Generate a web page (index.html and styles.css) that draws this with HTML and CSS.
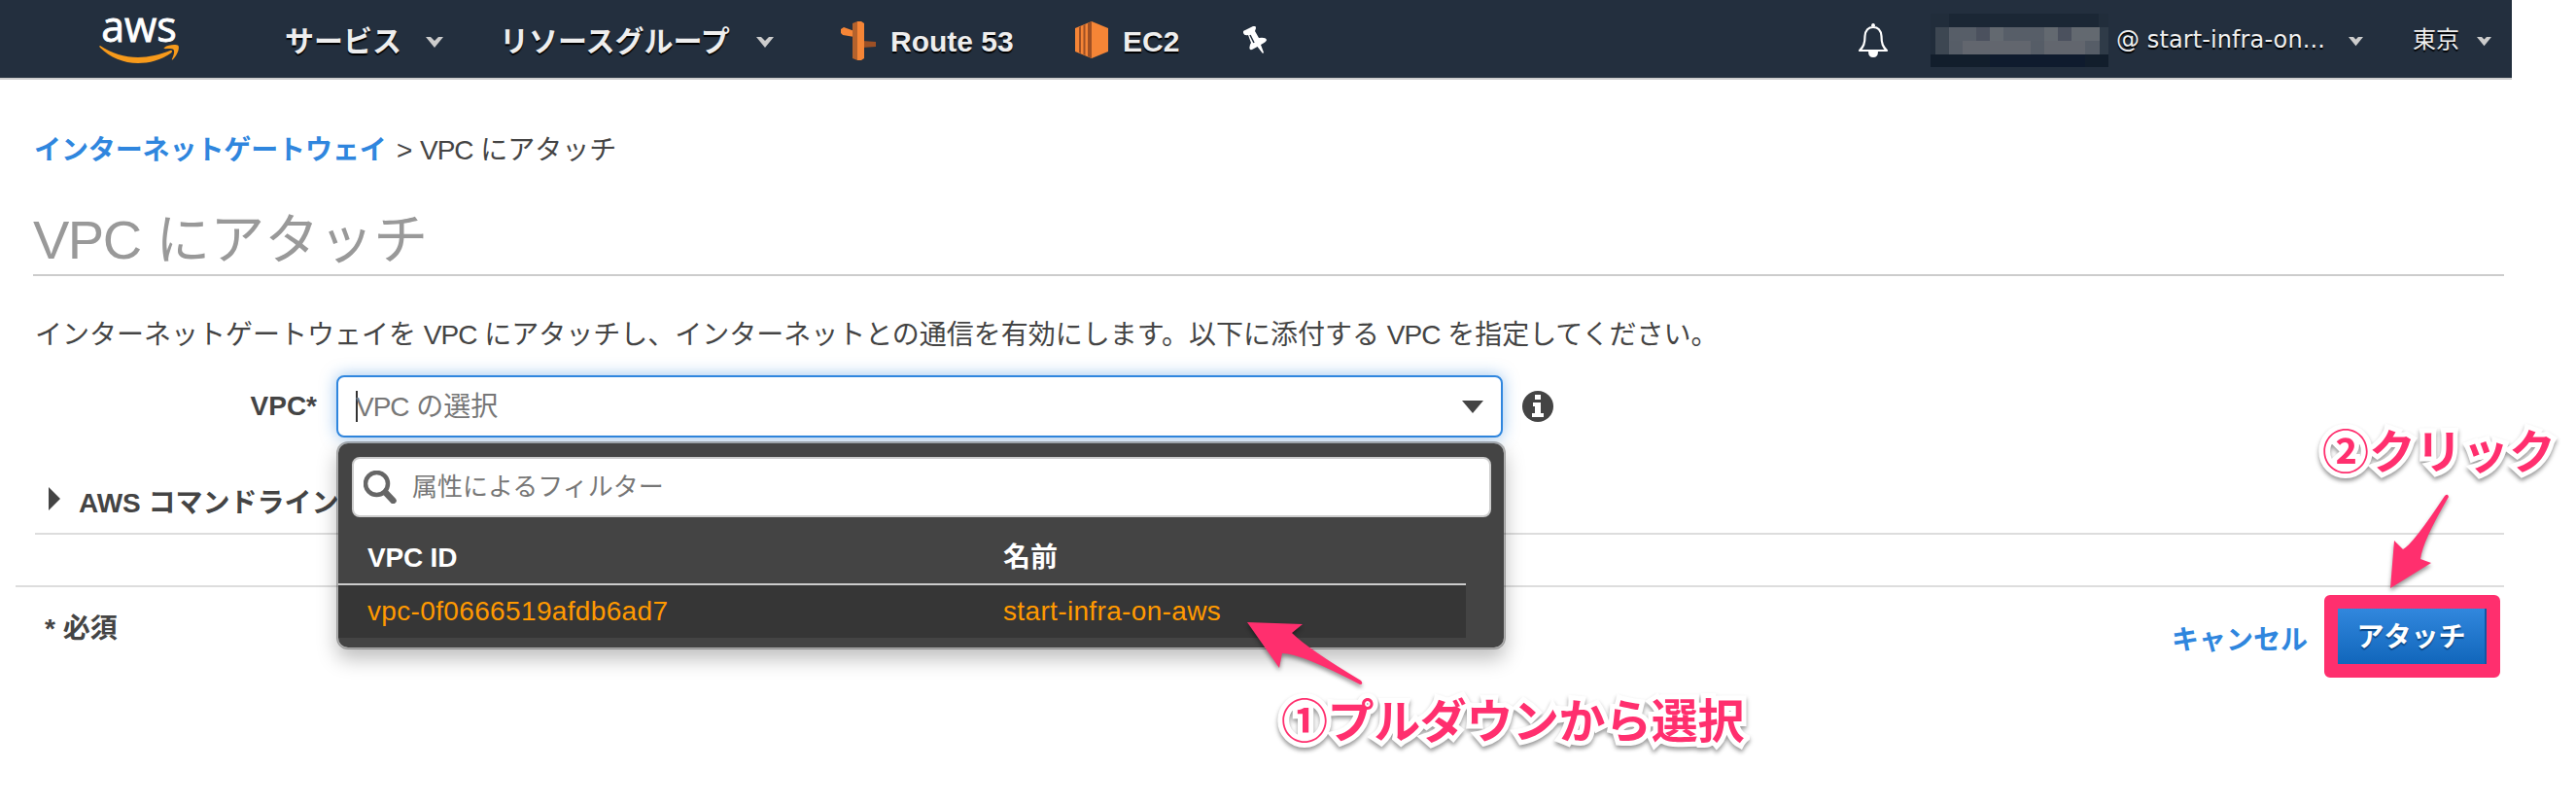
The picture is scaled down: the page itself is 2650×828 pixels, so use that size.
FILE: index.html
```html
<!DOCTYPE html>
<html lang="ja">
<head>
<meta charset="utf-8">
<title>VPC にアタッチ</title>
<link rel="stylesheet" href="styles.css">
</head>
<body>
<header class="nav">
  <div class="logo">
    <span class="logo-text">aws</span>
    <svg class="logo-smile" viewBox="0 0 82 20" width="82" height="20"><path fill="#f79a1b" d="M1 1C13 9 26 13 40 13C51 13 63 10 73 6C75 5 76 7 74 8.500C64 16 51 19 40 19C25 19 11 13 1 3C0 2 0 1 1 1Z"/><path fill="#f79a1b" d="M67 3C71-.5 80-.5 81.500 1C83 4 80 11 76 15C75 16 74.500 15.500 75 14.500C76.500 11 78 7 76.500 5C75 3.500 71 4 68 4.200C67 4.200 66 3.700 67 3Z"/></svg>
  </div>
  <a class="nav-item services">サービス</a>
  <svg class="caret caret-1" viewBox="0 0 18 12" width="18" height="12"><path d="M0 0H5L9 4L13 0H18L9 11Z" fill="#ccc"/></svg>
  <a class="nav-item groups">リソースグループ</a>
  <svg class="caret caret-2" viewBox="0 0 18 12" width="18" height="12"><path d="M0 0H5L9 4L13 0H18L9 11Z" fill="#ccc"/></svg>
  <svg class="route-icon" viewBox="0 0 36 40" width="36" height="40"><path fill="#f58536" d="M0 8L3 6L14 10V16L2 14L0 12Z"/><path fill="#9d5025" d="M22 20L36 21V26L22 27Z"/><path fill="#b5622c" d="M12 2L17 0V40L12 38Z"/><path fill="#f58536" d="M17 0H21L24 2V38L21 40H17Z"/></svg>
  <a class="nav-item route">Route 53</a>
  <svg class="ec2-icon" viewBox="0 0 34 38" width="34" height="38"><path fill="#f58536" d="M0 7L17 0L34 7V31L17 38L0 31Z"/><path fill="#9d5025" d="M4 6L6 5V33L4 32ZM8.500 4L10.500 3V35L8.500 34ZM13 2L17 0V38L13 36Z"/></svg>
  <a class="nav-item ec2">EC2</a>
  <svg class="pin" viewBox="0 0 24 28" width="24" height="28"><path fill="#fff" d="M0 7Q-1 5 2 4L10 0Q13-1 13 2L12 5L16 12Q23 11 24 14Q24 16 18 19L21 27L20 28L14.500 21Q7 26 6.500 23Q6 20 8 17L5 9Q1 10 0 7Z"/><path d="M7 9L11 17" stroke="#232f3e" stroke-width="1.500"/></svg>
  <svg class="bell" viewBox="0 0 32 36" width="32" height="36"><path fill="#fff" d="M14 3Q14 0 16 0Q18 0 18 3ZM11 29H21Q21 35 16 35Q11 35 11 29Z"/><path fill="none" stroke="#fff" stroke-width="2.200" stroke-linejoin="round" d="M16 4C10 4 8 8 7.500 13C7.500 21 6 24 2 28H30C26 24 24.500 21 24.500 13C24 8 22 4 16 4Z"/></svg>
  <svg class="mask" viewBox="0 0 183 55" width="183" height="55" shape-rendering="crispEdges">
    <path fill="#212d3b" d="M0 0H183V55H0Z"/><path fill="#1b2735" d="M19 0H173V14H19Z"/>
    <path fill="#121e2c" d="M0 42H183V55H0Z"/><path fill="#0f1b2e" d="M61 42H159V55H61Z"/><path fill="#3d4752" d="M5 14H19V42H5Z"/><path fill="#2f3b48" d="M174 14H183V42H174Z"/>
    <path fill="#575e68" d="M19 14H174V28H19Z"/><path fill="#62666e" d="M19 28H174V42H19Z"/>
    <path fill="#4b515e" d="M47 14H61V28H47ZM131 14H145V28H131Z"/><path fill="#636970" d="M61 14H75V28H61ZM117 14H131V28H117ZM145 14H174V28H145Z"/>
    <path fill="#565d67" d="M19 28H33V42H19ZM103 28H117V42H103ZM159 28H174V42H159Z"/>
  </svg>
  <a class="nav-small account">@ start-infra-on...</a>
  <svg class="caret caret-3" viewBox="0 0 18 12" width="15" height="10"><path d="M0 0H6L9 3L12 0H18L9 11Z" fill="#ccc"/></svg>
  <a class="nav-small region">東京</a>
  <svg class="caret caret-4" viewBox="0 0 18 12" width="15" height="10"><path d="M0 0H6L9 3L12 0H18L9 11Z" fill="#ccc"/></svg>
</header>
<main class="page">
  <nav class="crumbs"><a class="crumb-link">インターネットゲートウェイ</a><span class="crumb-sep">&gt;</span><span class="crumb-here"><span class="lat">VPC</span> にアタッチ</span></nav>
  <h1 class="title"><span class="lat-title">VPC</span> にアタッチ</h1>
  <p class="lead">インターネットゲートウェイを <span class="lat">VPC</span> にアタッチし、インターネットとの通信を有効にします。以下に添付する <span class="lat">VPC</span> を指定してください。</p>
  <div class="field">
    <label class="field-label">VPC*</label>
    <div class="combo">
      <div class="combo-input"><span class="cursor"></span><span class="placeholder"><span class="lat">VPC</span> の選択</span>
        <svg class="combo-arrow" viewBox="0 0 22 13" width="22" height="13"><path d="M0 0H22L11 13Z" fill="#444"/></svg>
      </div>
      <div class="dropdown">
        <div class="search">
          <svg viewBox="0 0 34 34" width="34" height="34"><circle cx="13.500" cy="13.500" r="11.500" fill="none" stroke="#666" stroke-width="4.500"/><path d="M22.500 22.500L30.500 31" stroke="#666" stroke-width="6.500" stroke-linecap="round"/></svg>
          <span class="search-text">属性によるフィルター</span>
        </div>
        <div class="row head"><span class="c-id">VPC ID</span><span class="c-name">名前</span></div>
        <div class="row item"><span class="c-id">vpc-0f0666519afdb6ad7</span><span class="c-name">start-infra-on-aws</span></div>
      </div>
    </div>
    <svg class="info" viewBox="0 0 32 32" width="32" height="32"><circle cx="16" cy="16" r="16" fill="#444"/><path fill="#fff" d="M13 4H19V9H13ZM11 12H19V23H22V27H10V23H13V16H11Z"/></svg>
  </div>
  <div class="cli"><svg class="disclosure" viewBox="0 0 12 24" width="12" height="24"><path d="M0 0L12 12L0 24Z" fill="#444"/></svg><span class="cli-text">AWS コマンドライン</span></div>
</main>
<footer class="foot">
  <span class="required">* 必須</span>
  <a class="cancel">キャンセル</a>
  <div class="highlight"><button class="attach">アタッチ</button></div>
</footer>
<div class="note note-1">①プルダウンから選択</div>
<div class="note note-2">②クリック</div>
<svg class="arrow arrow-1" viewBox="1280 636 130 76" width="130" height="76"><path fill="#ff2f6e" d="M1283 640L1340 642L1329 651Q1345 667 1400 700Q1403 704 1399 704Q1338 672 1319 672L1316 687Z"/></svg>
<svg class="arrow arrow-2" viewBox="2455 505 70 106" width="70" height="106"><path fill="#ff2f6e" d="M2515 510Q2518 507 2519 511Q2492 557 2490 575L2501 579L2459 605L2463 556L2472 565Q2482 560 2515 510Z"/></svg>
</body>
</html>
```
FILE: styles.css
```css
* { box-sizing: border-box; }
body {
  margin: 0;
  width: 2650px;
  height: 828px;
  overflow: hidden;
  position: relative;
  background: #fff;
  color: #444;
  font: 28px/40px "Liberation Sans", "Noto Sans CJK JP", sans-serif;
  white-space: nowrap;
}
svg { display: block; flex: none; }
.lat { letter-spacing: -1px; }

/* top bar */
.nav {
  width: 2584px;
  height: 82px;
  background: #232f3e;
  border-bottom: 2px solid #ccc;
  display: flex;
  align-items: flex-start;
}
.nav > * { flex: none; }
.logo { width: 82px; margin: 7px 0 0 102px; display: flex; flex-direction: column; align-items: center; }
.logo-text { font: 43px/39px "Open Sans", sans-serif; color: #fff; -webkit-text-stroke: .8px #fff; }
.nav-item { font-size: 30px; line-height: 40px; margin-top: 23px; font-weight: bold; color: #eee; text-shadow: 0 2px 1px #000; }
.services { width: 120px; margin-left: 109px; }
.caret { margin-top: 38px; }
.caret-1 { margin-left: 25px; }
.groups { width: 240px; margin-left: 58px; }
.caret-2 { margin-left: 24px; }
.route-icon { margin: 22px 0 0 69px; }
.route { width: 128px; margin-left: 15px; }
.ec2-icon { margin: 22px 0 0 62px; }
.ec2 { width: 60px; margin-left: 15px; }
.pin { margin: 27px 0 0 64px; }
.bell { margin: 24px 0 0 608px; }
.mask { margin: 14px 0 0 43px; }
.nav-small { font: 24px/40px "DejaVu Sans", "Noto Sans CJK JP", sans-serif; margin-top: 21px; color: #eee; text-shadow: 0 2px 1px #000; }
.account { width: 213px; margin-left: 8px; letter-spacing: 0.1px; }
.caret-3 { margin-left: 26px; }
.region { width: 48px; margin-left: 51px; }
.caret-4 { margin-left: 18px; }

/* page body */
.page { width: 2576px; padding: 53px 0 0 34px; }
.crumbs { display: flex; padding-left: 1px; }
.crumb-link { color: #2f86de; font-weight: bold; width: 373px; letter-spacing: -0.1px; }
.crumb-sep { width: 24px; }
.title { margin: 42px 0 0; padding-bottom: 5px; border-bottom: 2px solid #ccc; font-size: 56px; line-height: 60px; font-weight: normal; color: #999; }
.lat-title { letter-spacing: -1.5px; }
.lead { margin: 41px 0 0; padding-left: 2px; }
.field { display: flex; align-items: center; margin-top: 21px; height: 64px; }
.field-label { width: 292px; text-align: right; margin-right: 20px; font-weight: bold; }
.combo { position: relative; width: 1200px; height: 64px; }
.combo-input { height: 64px; display: flex; align-items: center; padding: 0 18px; border: 2px solid #2f86de; border-radius: 8px; box-shadow: 0 0 16px rgba(47, 134, 222, .5); background: #fff; color: #777; }
.cursor { width: 2px; height: 32px; background: #333; margin-right: -2px; }
.placeholder { padding-top: 1px; }
.combo-arrow { margin-left: auto; }
.info { margin-left: 20px; }
.dropdown { position: absolute; z-index: 2; left: 0; top: 68px; width: 1203px; height: 214px; padding: 14px 0 0; background: #444; background-clip: padding-box; border: 2px solid rgba(0, 0, 0, .3); border-radius: 12px; box-shadow: 0 10px 20px rgba(0, 0, 0, .25); }
.search { display: flex; align-items: center; gap: 16px; width: 1172px; height: 62px; margin-left: 14px; padding-left: 10px; background: #fff; border: 2px solid #ccc; border-radius: 8px; color: #777; font-size: 26px; }
.row { width: 1160px; display: flex; padding-left: 30px; }
.c-id { width: 654px; }
.head { height: 70px; padding-top: 22px; border-bottom: 2px solid #ccc; color: #fff; font-weight: bold; }
.head .c-id { letter-spacing: -0.2px; }
.item { height: 54px; align-items: center; background: #363636; color: #f90; letter-spacing: 0.35px; }
.cli { display: flex; margin: 48px 0 0 2px; height: 52px; border-bottom: 2px solid #ddd; font-weight: bold; }
.disclosure { margin: 3px 19px 0 14px; }

/* action bar */
.foot { width: 2560px; margin: 52px 0 0 16px; border-top: 2px solid #ddd; display: flex; font-weight: bold; }
.required { margin: 23px auto 0 30px; }
.cancel { margin: 35px 17px 0 0; color: #2f86de; }
.highlight { width: 181px; height: 85px; margin: 8px 4px 0 0; border: 14px solid #ff2f6e; border-radius: 6px; }
.attach { display: block; width: 153px; height: 57px; padding: 3px 0 0; border: 0; border-right: 2px solid #1257a5; background: linear-gradient(#3187dd, #1166bb); color: #fff; font: bold 28px/54px "Liberation Sans", "Noto Sans CJK JP", sans-serif; text-shadow: 0 2px 1px #0b4684; }

/* callouts */
.note { position: absolute; z-index: 3; font: bold 48px/60px "Noto Sans CJK JP", sans-serif; color: #ff2f6e; -webkit-text-stroke: 10px #fff; paint-order: stroke fill; filter: drop-shadow(0 3px 2px rgba(0, 0, 0, .4)); }
.note-1 { left: 1318px; top: 708px; letter-spacing: -0.4px; }
.note-2 { left: 2389px; top: 431px; }
.arrow { position: absolute; z-index: 3; filter: drop-shadow(0 3px 2px rgba(0, 0, 0, .4)); }
.arrow-1 { left: 1280px; top: 636px; }
.arrow-2 { left: 2455px; top: 505px; }
```
